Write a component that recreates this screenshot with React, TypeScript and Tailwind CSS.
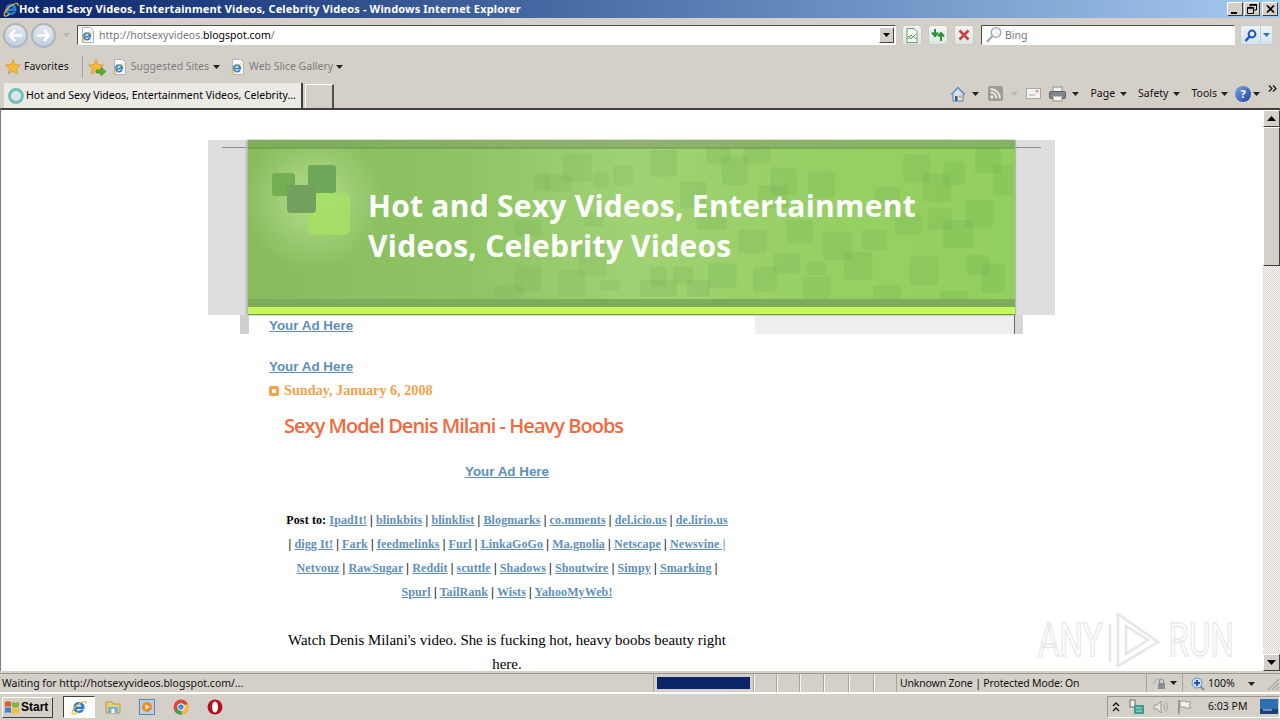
import type { ReactNode } from 'react';

const chromeFont = 'font-["Noto_Sans","Liberation_Sans",sans-serif]';
const bevel = 'border border-t-white border-l-white border-r-[#404040] border-b-[#404040] bg-[#d4d0c8]';

/** The little "e" page icon used in the address bar and the favorites bar. */
function PageIcon() {
  return (
    <svg width="16" height="16" viewBox="0 0 16 16" className="shrink-0">
      <path d="M2.5.5h8l3 3v12h-11z" fill="#fff" stroke="#a9b4bf" />
      <IeGlyph x={1} y={3} size={12} />
    </svg>
  );
}

function IeGlyph({ x, y, size }: { x: number; y: number; size: number }) {
  const s = size / 16;
  return (
    <g transform={`translate(${x},${y}) scale(${s})`}>
      <path d="M8 3a5.5 5.5 0 1 0 5 7.6h-3a2.6 2.6 0 0 1-4.600-.6H13.500A5.500 5.500 0 0 0 8 3zM5.500 7.500a2.600 2.600 0 0 1 5 0z" fill="#2a7fd4" fillRule="evenodd" />
      <path d="M1.500 12.500C3 8 8 3.500 13 2.500c1.500-.4 2.500.6 1.800 2.500M3 9c-2 3.500-2.500 5.500-1.200 6 1 .4 3-.4 5-2" fill="none" stroke="#f2b632" strokeWidth="1.200" />
    </g>
  );
}

function IeTitleIcon({ size = 16 }: { size?: number }) {
  return (
    <svg width={size} height={size} viewBox="0 0 16 16" className="shrink-0">
      <IeGlyph x={0} y={0} size={16} />
    </svg>
  );
}

function Star({ className = '' }: { className?: string }) {
  return (
    <svg width="16" height="16" viewBox="0 0 16 16" className={`shrink-0 ${className}`}>
      <path d="M8 .8l2.200 4.800 5.200.6-3.900 3.500 1.100 5.200L8 12.300l-4.600 2.600 1.100-5.200L.6 6.200l5.200-.6z" fill="#f6b93a" stroke="#c98a1e" strokeWidth=".6" />
    </svg>
  );
}

function Caret({ color = '#222' }: { color?: string }) {
  return (
    <svg width="7" height="4" viewBox="0 0 7 4" className="shrink-0">
      <path d="M0 0h7L3.500 4z" fill={color} />
    </svg>
  );
}

function NavCircle({ dir }: { dir: 'left' | 'right' }) {
  return (
    <div className="flex h-[25px] w-[25px] items-center justify-center rounded-full border-2 border-[#aeb4bc] bg-gradient-to-b from-[#e4e8ee] to-[#bcd0e6]">
      <svg width="15" height="13" viewBox="0 0 15 13">
        <path
          d={dir === 'left' ? 'M7 1L2 6.500 7 12M2 6.500h12' : 'M8 1l5 5.500L8 12M13 6.500H1'}
          fill="none"
          stroke="#fff"
          strokeWidth="2.500"
        />
      </svg>
    </div>
  );
}

function SquareButton({ children }: { children: ReactNode }) {
  return (
    <div className="flex h-[20px] w-[20px] items-center justify-center rounded-[3px] border border-[#c4ccc8] bg-gradient-to-b from-[#f2f5f2] to-[#dfe6e2]">
      {children}
    </div>
  );
}

function WindowButton({ children }: { children: ReactNode }) {
  return <div className={`flex h-[14px] w-[16px] items-center justify-center ${bevel}`}>{children}</div>;
}

function TitleBar() {
  return (
    <div className="flex h-[18px] shrink-0 items-center bg-gradient-to-r from-[#0a246a] to-[#a6caf0] pl-[3px] pr-[2px]">
      <IeTitleIcon />
      <span className={`mb-[1px] text-[11px] font-bold leading-none tracking-[0.16px] whitespace-nowrap text-white ${chromeFont}`}>
        Hot and Sexy Videos, Entertainment Videos, Celebrity Videos - Windows Internet Explorer
      </span>
      <div className="ml-auto flex items-center">
        <WindowButton>
          <div className="mt-[7px] mr-[3px] h-[2px] w-[6px] bg-black" />
        </WindowButton>
        <div className="w-[1px]" />
        <WindowButton>
          <svg width="10" height="10" viewBox="0 0 10 10">
            <path d="M3 .5h6.500V6H7M.5 3.500H6.500V9.500H.5zM3 .5v2" fill="none" stroke="#000" />
            <path d="M3 1h6.500M.5 4h6" stroke="#000" strokeWidth="1.500" />
          </svg>
        </WindowButton>
        <div className="w-[2px]" />
        <WindowButton>
          <svg width="9" height="8" viewBox="0 0 9 8">
            <path d="M1 .5l7 7M8 .5l-7 7" stroke="#000" strokeWidth="1.600" />
          </svg>
        </WindowButton>
      </div>
    </div>
  );
}

function AddressRow() {
  return (
    <div className={`flex h-[34px] shrink-0 items-center pl-[3px] ${chromeFont}`}>
      <NavCircle dir="left" />
      <div className="w-[3px]" />
      <NavCircle dir="right" />
      <div className="mx-[7px]">
        <Caret color="#b5b5b0" />
      </div>
      <div className="flex h-[20px] w-[819px] items-center border border-t-[#505050] border-l-[#505050] border-r-white border-b-white bg-white pl-[2px]">
        <PageIcon />
        <span className="mt-[1px] ml-[3px] text-[10.500px] text-[#77787a]">
          http://hotsexyvideos.<span className="text-black">blogspot.com</span>/
        </span>
        <div className={`ml-auto mr-[1px] flex h-[16px] w-[15px] items-center justify-center ${bevel}`}>
          <Caret color="#000" />
        </div>
      </div>
      <div className="ml-[6px] flex gap-[6px]">
        <SquareButton>
          <svg width="14" height="15" viewBox="0 0 14 15">
            <path d="M2 .5h7l3 3v11H2z" fill="#fff" stroke="#5aa55a" />
            <path d="M3 8l3 3 2-3 3 3M3 11l3-4 2 2 3-3" fill="none" stroke="#4f9e4f" />
          </svg>
        </SquareButton>
        <SquareButton>
          <svg width="16" height="12" viewBox="0 0 16 12">
            <path d="M5 0v6M2 3.500L5 7l3-3.500M11 12V5M8 7.500L11 4l3 3.500" fill="none" stroke="#2e8b37" strokeWidth="2" />
          </svg>
        </SquareButton>
        <SquareButton>
          <svg width="12" height="12" viewBox="0 0 12 12">
            <path d="M1.500 1.500l9 9M10.500 1.500l-9 9" stroke="#c9413f" strokeWidth="2.600" />
          </svg>
        </SquareButton>
      </div>
      <div className="ml-[7px] flex h-[20px] w-[254px] items-center border border-t-[#505050] border-l-[#505050] border-r-white border-b-white bg-white pl-[3px]">
        <svg width="18" height="18" viewBox="0 0 18 18" className="shrink-0">
          <circle cx="11" cy="6.500" r="4.800" fill="#eef3f7" stroke="#9aa6ae" strokeWidth="1.300" />
          <path d="M7.500 10L2 16" stroke="#a8a8a4" strokeWidth="2.200" />
        </svg>
        <span className="mt-[1px] ml-[2px] text-[10.500px] text-[#77787a]">Bing</span>
      </div>
      <div className="ml-[5px] flex h-[20px] w-[33px] items-center rounded-[3px] border border-[#c3ced8] bg-gradient-to-b from-[#edf2f8] to-[#d7e2ef]">
        <div className="flex h-full w-[20px] items-center justify-center border-r border-[#c3ced8]">
          <svg width="13" height="13" viewBox="0 0 13 13">
            <circle cx="8" cy="5" r="3.400" fill="none" stroke="#1f55c2" strokeWidth="2" />
            <path d="M5.500 7.500L1.500 12" stroke="#1f55c2" strokeWidth="2.500" />
          </svg>
        </div>
        <div className="flex flex-1 justify-center">
          <Caret color="#3d70c4" />
        </div>
      </div>
    </div>
  );
}

function FavoritesRow() {
  return (
    <div className={`flex h-[30px] shrink-0 items-center pl-[5px] text-[10.500px] ${chromeFont}`}>
      <Star />
      <span className="ml-[3px] text-[#1a1a1a]">Favorites</span>
      <div className="ml-[13px] h-[22px] w-[1px] bg-[#a8a59e]" />
      <div className="relative ml-[5px] h-[16px] w-[17px]">
        <Star />
        <svg width="10" height="9" viewBox="0 0 10 9" className="absolute right-[-1px] bottom-[-1px]">
          <path d="M0 3h5V0l5 4.500L5 9V6H0z" fill="#54b432" stroke="#2d7a1a" strokeWidth=".5" />
        </svg>
      </div>
      <div className="ml-[7px]">
        <PageIcon />
      </div>
      <span className="ml-[3px] text-[#7b7c7e]">Suggested Sites</span>
      <div className="ml-[4px]">
        <Caret />
      </div>
      <div className="ml-[10px]">
        <PageIcon />
      </div>
      <span className="ml-[3px] text-[#7b7c7e]">Web Slice Gallery</span>
      <div className="ml-[3px]">
        <Caret />
      </div>
    </div>
  );
}

function TabRow() {
  return (
    <div className={`flex h-[26px] shrink-0 items-end pl-[4px] text-[10.500px] ${chromeFont}`}>
      <div className="flex h-[25px] w-[299px] items-center border-r-2 border-[#404040] bg-[#eceae5] pl-[4px]">
        <div className="h-[16px] w-[16px] shrink-0 rounded-full border-[3px] border-[#6fc0bc] bg-[#d7e5e8]" />
        <span className="ml-[2px] whitespace-nowrap text-black">Hot and Sexy Videos, Entertainment Videos, Celebrity...</span>
      </div>
      <div className="ml-[2px] h-[24px] w-[29px] border-t border-r-2 border-l border-t-white border-l-white border-r-[#505050]" />
      <div className="ml-auto flex h-full items-center pb-[3px] pr-[3px] text-[#111]">
        <svg width="16" height="16" viewBox="0 0 16 16">
          <path d="M8 1L1 8h2v7h10V8h2z" fill="#d6e2f0" stroke="#5b7ea8" />
          <path d="M8 1L1 8h2l5-5 5 5h2z" fill="#7a9cc4" />
          <rect x="5" y="10" width="2.500" height="5" fill="#2c5a94" />
          <rect x="9" y="9.500" width="2.500" height="2.500" fill="#e5a33a" />
        </svg>
        <div className="ml-[6px]">
          <Caret />
        </div>
        <svg width="15" height="15" viewBox="0 0 15 15" className="ml-[9px]">
          <rect width="15" height="15" rx="2" fill="#9c9b94" />
          <circle cx="4" cy="11" r="1.700" fill="#e8e8e4" />
          <path d="M2.500 6.500a6 6 0 0 1 6 6M2.500 3a9.500 9.500 0 0 1 9.500 9.500" fill="none" stroke="#e8e8e4" strokeWidth="1.800" />
        </svg>
        <div className="ml-[8px]">
          <Caret color="#b8b6af" />
        </div>
        <svg width="15" height="11" viewBox="0 0 15 11" className="ml-[8px]">
          <rect x=".5" y=".5" width="14" height="10" fill="#f3f2ee" stroke="#aaa9a3" />
          <rect x="9.500" y="2" width="3" height="2.500" fill="#d79b8f" />
          <path d="M3 7h6" stroke="#aaa9a3" />
        </svg>
        <svg width="17" height="16" viewBox="0 0 17 16" className="ml-[8px]">
          <rect x="4" y="1" width="9" height="5" fill="#f0f0ee" stroke="#8d8d8a" />
          <rect x=".5" y="5.500" width="16" height="7" rx="1.500" fill="#7f8891" stroke="#5a6068" />
          <rect x="4" y="10" width="9" height="5" fill="#f5f5f3" stroke="#8d8d8a" />
        </svg>
        <div className="ml-[6px]">
          <Caret />
        </div>
        <span className="ml-[11px]">Page</span>
        <div className="ml-[5px]">
          <Caret />
        </div>
        <span className="ml-[11px]">Safety</span>
        <div className="ml-[5px]">
          <Caret />
        </div>
        <span className="ml-[11px]">Tools</span>
        <div className="ml-[4px]">
          <Caret />
        </div>
        <div className="ml-[7px] flex h-[16px] w-[16px] items-center justify-center rounded-full bg-gradient-to-br from-[#7fa6e6] to-[#1c3f9e] text-[11px] font-bold leading-none text-white">
          ?
        </div>
        <div className="ml-[2px]">
          <Caret />
        </div>
        <svg width="9" height="7" viewBox="0 0 9 7" className="mb-[10px] ml-[8px]">
          <path d="M1 .5L4 3.500 1 6.500M5 .5L8 3.500 5 6.500" fill="none" stroke="#111" strokeWidth="1.200" />
        </svg>
      </div>
    </div>
  );
}

/** Decorative header art: coordinates are taken from 3x crops, hence the scale. */
const rightSquares = [
  [30, 60, 80, 80], [200, 50, 70, 50], [245, 80, 80, 85], [310, 50, 80, 50], [390, 115, 80, 80], [505, 125, 80, 80],
  [355, 165, 90, 70], [120, 155, 80, 80], [170, 240, 90, 60], [295, 300, 85, 70], [440, 270, 80, 70], [550, 305, 85, 85],
  [665, 300, 75, 60], [705, 170, 75, 70], [765, 250, 80, 65], [790, 72, 80, 85], [848, 130, 85, 85], [910, 95, 65, 70],
  [1005, 55, 80, 75], [1060, 105, 60, 90], [865, 235, 70, 65], [910, 270, 90, 85], [975, 210, 85, 85], [612, 365, 85, 85],
  [810, 380, 85, 85], [340, 410, 70, 75], [205, 400, 85, 75], [400, 370, 80, 60], [500, 395, 60, 40], [490, 440, 80, 70],
  [700, 465, 85, 45], [900, 480, 85, 30], [980, 375, 70, 60], [1025, 400, 70, 90], [140, 450, 70, 50], [30, 410, 50, 60],
  [100, 410, 60, 50], [0, 450, 110, 50],
];
const leftSquares = [
  [1090, 70, 85, 85], [1030, 135, 85, 50], [1180, 125, 45, 50], [1240, 105, 60, 60], [945, 270, 80, 50], [1150, 250, 60, 40],
  [1135, 340, 85, 100], [1075, 420, 80, 80], [945, 405, 80, 80], [880, 465, 90, 40], [1200, 450, 60, 30], [1000, 130, 50, 50],
];

function BannerArt() {
  return (
    <svg width="767" height="175" viewBox="0 0 767 175" className="absolute inset-0">
      <defs>
        <linearGradient id="base" x1="0" x2="1" y1="0" y2="0">
          <stop offset="0" stopColor="#88bb5e" />
          <stop offset=".3" stopColor="#8fc565" />
          <stop offset=".5" stopColor="#a0d273" />
          <stop offset=".75" stopColor="#96d064" />
          <stop offset="1" stopColor="#92d05e" />
        </linearGradient>
        <radialGradient id="glow" cx=".5" cy=".5" r=".5">
          <stop offset="0" stopColor="#b9e08f" stopOpacity=".9" />
          <stop offset="1" stopColor="#b9e08f" stopOpacity="0" />
        </radialGradient>
        <linearGradient id="topband" x1="0" x2="1" y1="0" y2="0">
          <stop offset="0" stopColor="#7dad58" />
          <stop offset=".5" stopColor="#8fb270" />
          <stop offset="1" stopColor="#84b462" />
        </linearGradient>
      </defs>
      <rect width="767" height="175" fill="url(#base)" />
      <circle cx="65" cy="60" r="70" fill="url(#glow)" />
      <g transform="translate(392,-10) scale(0.3333)">
        {rightSquares.map(([x, y, w, h]) => (
          <rect key={`${x}-${y}`} x={x} y={y} width={w} height={h} rx="9" fill="#5f9a4c" fillOpacity=".15" />
        ))}
      </g>
      <g transform="translate(-48,-10) scale(0.3333)">
        {leftSquares.map(([x, y, w, h]) => (
          <rect key={`${x}-${y}`} x={x} y={y} width={w} height={h} rx="9" fill="#5f9a4c" fillOpacity=".12" />
        ))}
      </g>
      <rect x="60" y="53" width="42" height="42" rx="6" fill="#a6e064" fillOpacity=".85" />
      <rect x="24" y="33" width="23" height="23" rx="3" fill="#73b055" />
      <rect x="60" y="25" width="28" height="28" rx="3" fill="#6fa758" />
      <rect x="39" y="45" width="29" height="28" rx="4" fill="#739f5f" />
      <rect width="767" height="7.500" fill="url(#topband)" />
      <rect y="7.500" width="767" height="1" fill="#5f8f46" />
      <rect y="159" width="767" height="8" fill="#7dac5d" />
      <rect y="167" width="767" height="7" fill="#c6f75c" />
      <rect y="174" width="767" height="1" fill="#6c9a3e" />
    </svg>
  );
}

function Ad({ className = '' }: { className?: string }) {
  return (
    <a href="#" className={`font-["Liberation_Sans",sans-serif] text-[13.400px] font-bold text-[#5d8fbd] underline ${className}`}>
      Your Ad Here
    </a>
  );
}

const postLines = [
  ['IpadIt!', 'blinkbits', 'blinklist', 'Blogmarks', 'co.mments', 'del.icio.us', 'de.lirio.us'],
  ['digg It!', 'Fark', 'feedmelinks', 'Furl', 'LinkaGoGo', 'Ma.gnolia', 'Netscape', 'Newsvine |'],
  ['Netvouz', 'RawSugar', 'Reddit', 'scuttle', 'Shadows', 'Shoutwire', 'Simpy', 'Smarking'],
  ['Spurl', 'TailRank', 'Wists', 'YahooMyWeb!'],
];

function PostTo() {
  return (
    <div className='mt-[24px] text-center font-["Liberation_Serif",serif] text-[12px] leading-[24px] font-bold tracking-[0.12px] text-black'>
      {postLines.map((links, i) => (
        <div key={links[0]} className="whitespace-nowrap">
          {i === 0 && <span>Post to: </span>}
          {i === 1 && <span>| </span>}
          {links.map((link, j) => (
            <span key={link}>
              {j > 0 && ' | '}
              <a href="#" className="text-[#5d8fbd] underline">
                {link}
              </a>
            </span>
          ))}
          {i === 2 && <span> |</span>}
        </div>
      ))}
    </div>
  );
}

function Page() {
  return (
    <div className="relative min-w-0 flex-1 overflow-hidden bg-white pt-[30px] pr-[1px]">
      <div className="mx-auto w-[847px]">
        <div className="relative flex h-[175px] justify-center bg-[#dedede]">
          <div className="absolute top-[7px] left-[14px] h-[1px] w-[819px] bg-[#8b8b8b]" />
          <div className="relative h-[175px] w-[767px] shadow-[-2px_0_2px_#b5b5b5,1px_0_1px_#b5b5b5]">
            <BannerArt />
            <h1 className='relative w-[600px] pt-[46px] pl-[120px] font-["Open_Sans",sans-serif] text-[30px] leading-[40px] font-bold tracking-[0.25px] whitespace-nowrap text-white'>
              Hot and Sexy Videos, Entertainment
              <br />
              Videos, Celebrity Videos
            </h1>
          </div>
        </div>
        <div className="mx-[32px] flex h-[19px]">
          <div className="w-[9px] bg-[#cfcfcf]" />
          <div className="flex-1 pl-[20px] leading-[19px]">
            <Ad />
          </div>
          <div className="w-[259px] bg-[#eeeeee]" />
          <div className="w-[1px] bg-[#666]" />
          <div className="w-[8px] bg-[#d8d8d8]" />
        </div>
        <div className="ml-[61px] w-[476px]">
          <div className="mt-[19px] leading-[24px]">
            <Ad />
          </div>
          <div className='flex h-[24px] items-center font-["Liberation_Serif",serif] text-[14.200px] font-bold text-[#f1a24c]'>
            <div className="mr-[5px] flex h-[10px] w-[10px] items-center justify-center rounded-[2px] bg-[#f1a24c]">
              <div className="h-[4px] w-[4px] rounded-[1px] bg-white" />
            </div>
            Sunday, January 6, 2008
          </div>
          <h2 className='mt-[8px] pl-[15px] font-["Open_Sans",sans-serif] text-[20px] leading-[30px] font-semibold tracking-[-0.97px] whitespace-nowrap text-[#f2693c]'>
            Sexy Model Denis Milani - Heavy Boobs
          </h2>
          <div className="mt-[17px] text-center leading-[24px]">
            <Ad />
          </div>
          <PostTo />
          <p className='mt-[24px] px-[15px] text-center font-["Liberation_Serif",serif] text-[14.900px] leading-[24px] text-black'>
            Watch Denis Milani&apos;s video. She is fucking hot, heavy boobs beauty right here.
          </p>
        </div>
      </div>
      <div className="absolute top-[500px] left-[1037px] flex h-[60px] w-[196px] items-center justify-between font-['Roboto',sans-serif] text-[46px] text-transparent [-webkit-text-stroke:1.500px_#e8e8e8]">
        <span className="origin-left scale-x-[0.72]">ANY</span>
        <svg width="56" height="60" viewBox="0 0 56 60" className="absolute left-[68px]" fill="none" stroke="#e6e6e6" strokeWidth="2.500">
          <path d="M4 14v38M12 4v52l40-24zM20 16v28l22-14z" />
        </svg>
        <span className="origin-right scale-x-[0.72]">RUN</span>
      </div>
    </div>
  );
}

function Scrollbar() {
  return (
    <div className="flex w-[17px] shrink-0 flex-col bg-[repeating-conic-gradient(#d4d0c8_0_25%,#fff_0_50%)] bg-[length:2px_2px]">
      <div className={`flex h-[17px] items-center justify-center ${bevel}`}>
        <svg width="9" height="5" viewBox="0 0 9 5">
          <path d="M0 5h9L4.500 0z" fill="#000" />
        </svg>
      </div>
      <div className={`h-[139px] ${bevel}`} />
      <div className="flex-1" />
      <div className={`flex h-[17px] items-center justify-center ${bevel}`}>
        <svg width="9" height="5" viewBox="0 0 9 5">
          <path d="M0 0h9L4.500 5z" fill="#000" />
        </svg>
      </div>
    </div>
  );
}

const statusCell = 'h-full border-l border-l-[#f6f5f2] border-r border-r-[#a8a59e]';

function StatusBar() {
  return (
    <div className={`flex h-[20px] shrink-0 items-center border-t border-b border-t-[#9b9890] border-b-white text-[10.500px] text-[#111] ${chromeFont}`}>
      <div className="mt-[1px] w-[653px] shrink-0 pl-[2px] whitespace-nowrap">Waiting for http://hotsexyvideos.blogspot.com/...</div>
      <div className="flex h-full w-[101px] items-center border-x border-[#a8a59e] px-[3px]">
        <div className="h-[12px] w-full bg-[#0a246a]" />
      </div>
      <div className={`w-[23px] ${statusCell}`} />
      <div className={`w-[23px] ${statusCell}`} />
      <div className={`w-[24px] ${statusCell}`} />
      <div className={`w-[25px] ${statusCell}`} />
      <div className={`w-[25px] ${statusCell}`} />
      <div className={`w-[23px] ${statusCell}`} />
      <div className="flex h-full w-[250px] items-center border-r border-[#a8a59e] pt-[1px] pl-[3px] tracking-[-0.17px]">Unknown Zone | Protected Mode: On</div>
      <div className="flex h-full w-[36px] items-center justify-center gap-[4px] border-r border-[#a8a59e]">
        <svg width="14" height="14" viewBox="0 0 14 14">
          <path d="M1 8l4-5 4 1" fill="none" stroke="#b8b6af" strokeWidth="1.500" />
          <rect x="6" y="7" width="7" height="6" fill="#8a8f96" />
          <path d="M7.500 7V5a2 2 0 0 1 4 0v2" fill="none" stroke="#8a8f96" />
        </svg>
        <Caret />
      </div>
      <div className="flex h-full w-[75px] items-center pt-[1px] pl-[8px]">
        <svg width="14" height="14" viewBox="0 0 14 14" className="shrink-0">
          <circle cx="6" cy="6" r="5" fill="#cfe0f5" stroke="#6d90c2" />
          <path d="M6 3v6M3 6h6" stroke="#1f55c2" strokeWidth="2" />
          <path d="M9.500 9.500L13 13" stroke="#8a8a86" strokeWidth="2" />
        </svg>
        <span className="ml-[3px]">100%</span>
        <div className="ml-auto mr-[3px]">
          <Caret />
        </div>
      </div>
      <svg width="16" height="16" viewBox="0 0 16 16" className="ml-auto shrink-0">
        <path d="M15 4L4 15M15 8l-7 7M15 12l-3 3" stroke="#a8a59e" strokeWidth="1.200" />
      </svg>
    </div>
  );
}

function Taskbar() {
  return (
    <div className={`flex h-[27px] shrink-0 items-center border-t border-t-white pl-[2px] ${chromeFont}`}>
      <div className={`flex h-[21px] w-[51px] items-center pl-[1px] ${bevel}`}>
        <svg width="16" height="14" viewBox="0 0 16 14" className="shrink-0">
          <path d="M1 2c2-1 4-1 6 0v5c-2-1-4-1-6 0z" fill="#e2592b" />
          <path d="M8 2c2 1 4 1 7 0v5c-3 1-5 1-7 0z" fill="#7db93a" />
          <path d="M1 8c2-1 4-1 6 0v5c-2-1-4-1-6 0z" fill="#3a7fd4" />
          <path d="M8 8c2 1 4 1 7 0v5c-3 1-5 1-7 0z" fill="#f2c232" />
        </svg>
        <span className="ml-[1px] font-['Liberation_Sans',sans-serif] text-[12px] font-bold text-black">Start</span>
      </div>
      <div className="ml-[10px] flex h-[22px] w-[32px] items-center justify-center border border-t-[#404040] border-l-[#404040] border-r-white border-b-white bg-white">
        <IeTitleIcon />
      </div>
      <div className="ml-[10px] flex gap-[18px]">
        <svg width="16" height="16" viewBox="0 0 16 16">
          <path d="M1 3h6l1 2h7v9H1z" fill="#e9cf7a" stroke="#b59a48" />
          <rect x="3" y="8" width="10" height="6" fill="#6fb5d8" />
          <rect x="6.500" y="10" width="3" height="4" fill="#fff" />
        </svg>
        <svg width="16" height="16" viewBox="0 0 16 16">
          <rect x=".5" y=".5" width="15" height="15" fill="#b9cfe6" stroke="#5c86b3" />
          <circle cx="8" cy="8" r="5" fill="#ef8a1f" />
          <path d="M6.500 5.500v5l4-2.500z" fill="#fff" />
        </svg>
        <svg width="16" height="16" viewBox="0 0 16 16">
          <circle cx="8" cy="8" r="7.500" fill="#d9483b" />
          <path d="M8 8L1.500 12a7.500 7.500 0 0 0 7.500 3.400z" fill="#3da54a" />
          <path d="M8 8l1 7.400A7.500 7.500 0 0 0 15 5.500H8z" fill="#f4c430" />
          <circle cx="8" cy="8" r="3.300" fill="#4a8be0" stroke="#fff" />
        </svg>
        <svg width="16" height="16" viewBox="0 0 16 16">
          <ellipse cx="8" cy="8" rx="7.500" ry="7.500" fill="#b8101a" />
          <ellipse cx="8" cy="8" rx="3" ry="5.500" fill="#fff" />
        </svg>
      </div>
      <div className="ml-auto flex h-[22px] w-[173px] items-center border border-t-[#9b9890] border-l-[#9b9890] border-r-white border-b-white pl-[4px] text-[10.500px] text-[#111]">
        <svg width="8" height="10" viewBox="0 0 8 10">
          <path d="M1 4l3-3 3 3M1 9l3-3 3 3" fill="none" stroke="#111" strokeWidth="1.300" />
        </svg>
        <svg width="16" height="16" viewBox="0 0 16 16" className="ml-[9px]">
          <rect x="1" y="1" width="5" height="7" fill="#f2f2ee" stroke="#6b6b68" />
          <rect x="5" y="6" width="10" height="9" fill="#3f9d90" />
          <path d="M7 9h6M7 12h6" stroke="#bde4dc" />
        </svg>
        <svg width="16" height="16" viewBox="0 0 16 16" className="ml-[8px]">
          <path d="M1 6h3l4-4v12l-4-4H1z" fill="#e6e4de" stroke="#9a988f" />
          <path d="M10.500 5c1.500 2 1.500 4 0 6M12.500 3c2.500 3 2.500 7 0 10" fill="none" stroke="#a8a59e" />
        </svg>
        <svg width="16" height="16" viewBox="0 0 16 16" className="ml-[8px]">
          <path d="M2 1v14" stroke="#8a8880" strokeWidth="1.500" />
          <path d="M3 2h5l1 1h5l-2 3 2 3H9L8 8H3z" fill="#f3f2ee" stroke="#9a988f" />
        </svg>
        <span className="ml-[15px] whitespace-nowrap">6:03 PM</span>
        <svg width="18" height="16" viewBox="0 0 18 16" className="ml-auto mr-[1px]">
          <rect width="18" height="15" fill="#2f6fb0" />
          <rect y="10" width="18" height="5" fill="#1b3f78" />
          <path d="M3 11h9" stroke="#cfe0f5" />
        </svg>
      </div>
    </div>
  );
}

export default function App() {
  return (
    <div className="flex h-[720px] w-[1280px] flex-col overflow-hidden bg-[#d4d0c8]">
      <TitleBar />
      <AddressRow />
      <FavoritesRow />
      <TabRow />
      <div className="mb-[2px] flex min-h-0 flex-1 border-t-2 border-l border-t-[#404040] border-l-[#808080] bg-white">
        <Page />
        <Scrollbar />
      </div>
      <StatusBar />
      <Taskbar />
    </div>
  );
}
